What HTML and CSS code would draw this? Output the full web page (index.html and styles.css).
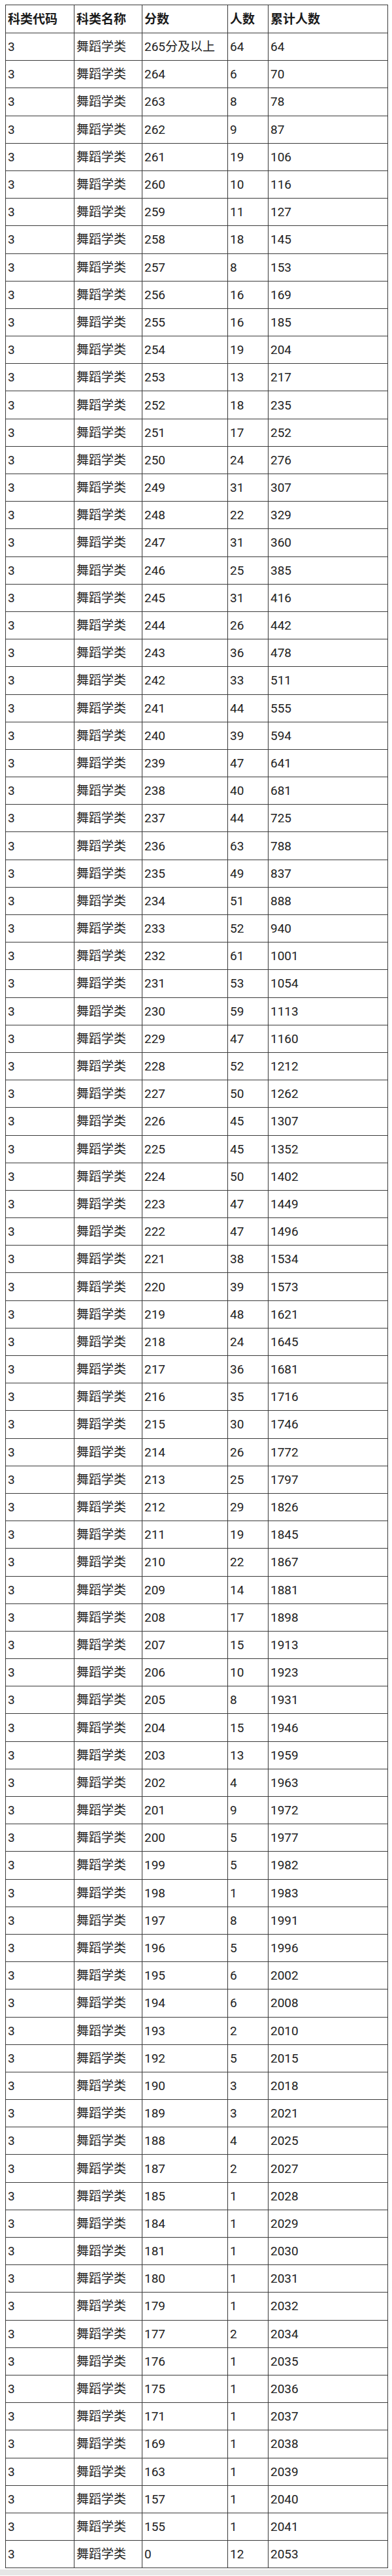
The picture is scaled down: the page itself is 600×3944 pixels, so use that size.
FILE: index.html
```html
<!DOCTYPE html>
<html lang="zh-CN">
<head>
<meta charset="utf-8">
<title>舞蹈学类 分数段统计</title>
<link rel="stylesheet" href="styles.css">
</head>
<body>
<div class="page">
<table class="score-table">
<colgroup>
<col class="c1"><col class="c2"><col class="c3"><col class="c4"><col class="c5">
</colgroup>
<thead>
<tr><th>科类代码</th><th>科类名称</th><th>分数</th><th>人数</th><th>累计人数</th></tr>
</thead>
<tbody>
<tr><td>3</td><td>舞蹈学类</td><td>265分及以上</td><td>64</td><td>64</td></tr>
<tr><td>3</td><td>舞蹈学类</td><td>264</td><td>6</td><td>70</td></tr>
<tr><td>3</td><td>舞蹈学类</td><td>263</td><td>8</td><td>78</td></tr>
<tr><td>3</td><td>舞蹈学类</td><td>262</td><td>9</td><td>87</td></tr>
<tr><td>3</td><td>舞蹈学类</td><td>261</td><td>19</td><td>106</td></tr>
<tr><td>3</td><td>舞蹈学类</td><td>260</td><td>10</td><td>116</td></tr>
<tr><td>3</td><td>舞蹈学类</td><td>259</td><td>11</td><td>127</td></tr>
<tr><td>3</td><td>舞蹈学类</td><td>258</td><td>18</td><td>145</td></tr>
<tr><td>3</td><td>舞蹈学类</td><td>257</td><td>8</td><td>153</td></tr>
<tr><td>3</td><td>舞蹈学类</td><td>256</td><td>16</td><td>169</td></tr>
<tr><td>3</td><td>舞蹈学类</td><td>255</td><td>16</td><td>185</td></tr>
<tr><td>3</td><td>舞蹈学类</td><td>254</td><td>19</td><td>204</td></tr>
<tr><td>3</td><td>舞蹈学类</td><td>253</td><td>13</td><td>217</td></tr>
<tr><td>3</td><td>舞蹈学类</td><td>252</td><td>18</td><td>235</td></tr>
<tr><td>3</td><td>舞蹈学类</td><td>251</td><td>17</td><td>252</td></tr>
<tr><td>3</td><td>舞蹈学类</td><td>250</td><td>24</td><td>276</td></tr>
<tr><td>3</td><td>舞蹈学类</td><td>249</td><td>31</td><td>307</td></tr>
<tr><td>3</td><td>舞蹈学类</td><td>248</td><td>22</td><td>329</td></tr>
<tr><td>3</td><td>舞蹈学类</td><td>247</td><td>31</td><td>360</td></tr>
<tr><td>3</td><td>舞蹈学类</td><td>246</td><td>25</td><td>385</td></tr>
<tr><td>3</td><td>舞蹈学类</td><td>245</td><td>31</td><td>416</td></tr>
<tr><td>3</td><td>舞蹈学类</td><td>244</td><td>26</td><td>442</td></tr>
<tr><td>3</td><td>舞蹈学类</td><td>243</td><td>36</td><td>478</td></tr>
<tr><td>3</td><td>舞蹈学类</td><td>242</td><td>33</td><td>511</td></tr>
<tr><td>3</td><td>舞蹈学类</td><td>241</td><td>44</td><td>555</td></tr>
<tr><td>3</td><td>舞蹈学类</td><td>240</td><td>39</td><td>594</td></tr>
<tr><td>3</td><td>舞蹈学类</td><td>239</td><td>47</td><td>641</td></tr>
<tr><td>3</td><td>舞蹈学类</td><td>238</td><td>40</td><td>681</td></tr>
<tr><td>3</td><td>舞蹈学类</td><td>237</td><td>44</td><td>725</td></tr>
<tr><td>3</td><td>舞蹈学类</td><td>236</td><td>63</td><td>788</td></tr>
<tr><td>3</td><td>舞蹈学类</td><td>235</td><td>49</td><td>837</td></tr>
<tr><td>3</td><td>舞蹈学类</td><td>234</td><td>51</td><td>888</td></tr>
<tr><td>3</td><td>舞蹈学类</td><td>233</td><td>52</td><td>940</td></tr>
<tr><td>3</td><td>舞蹈学类</td><td>232</td><td>61</td><td>1001</td></tr>
<tr><td>3</td><td>舞蹈学类</td><td>231</td><td>53</td><td>1054</td></tr>
<tr><td>3</td><td>舞蹈学类</td><td>230</td><td>59</td><td>1113</td></tr>
<tr><td>3</td><td>舞蹈学类</td><td>229</td><td>47</td><td>1160</td></tr>
<tr><td>3</td><td>舞蹈学类</td><td>228</td><td>52</td><td>1212</td></tr>
<tr><td>3</td><td>舞蹈学类</td><td>227</td><td>50</td><td>1262</td></tr>
<tr><td>3</td><td>舞蹈学类</td><td>226</td><td>45</td><td>1307</td></tr>
<tr><td>3</td><td>舞蹈学类</td><td>225</td><td>45</td><td>1352</td></tr>
<tr><td>3</td><td>舞蹈学类</td><td>224</td><td>50</td><td>1402</td></tr>
<tr><td>3</td><td>舞蹈学类</td><td>223</td><td>47</td><td>1449</td></tr>
<tr><td>3</td><td>舞蹈学类</td><td>222</td><td>47</td><td>1496</td></tr>
<tr><td>3</td><td>舞蹈学类</td><td>221</td><td>38</td><td>1534</td></tr>
<tr><td>3</td><td>舞蹈学类</td><td>220</td><td>39</td><td>1573</td></tr>
<tr><td>3</td><td>舞蹈学类</td><td>219</td><td>48</td><td>1621</td></tr>
<tr><td>3</td><td>舞蹈学类</td><td>218</td><td>24</td><td>1645</td></tr>
<tr><td>3</td><td>舞蹈学类</td><td>217</td><td>36</td><td>1681</td></tr>
<tr><td>3</td><td>舞蹈学类</td><td>216</td><td>35</td><td>1716</td></tr>
<tr><td>3</td><td>舞蹈学类</td><td>215</td><td>30</td><td>1746</td></tr>
<tr><td>3</td><td>舞蹈学类</td><td>214</td><td>26</td><td>1772</td></tr>
<tr><td>3</td><td>舞蹈学类</td><td>213</td><td>25</td><td>1797</td></tr>
<tr><td>3</td><td>舞蹈学类</td><td>212</td><td>29</td><td>1826</td></tr>
<tr><td>3</td><td>舞蹈学类</td><td>211</td><td>19</td><td>1845</td></tr>
<tr><td>3</td><td>舞蹈学类</td><td>210</td><td>22</td><td>1867</td></tr>
<tr><td>3</td><td>舞蹈学类</td><td>209</td><td>14</td><td>1881</td></tr>
<tr><td>3</td><td>舞蹈学类</td><td>208</td><td>17</td><td>1898</td></tr>
<tr><td>3</td><td>舞蹈学类</td><td>207</td><td>15</td><td>1913</td></tr>
<tr><td>3</td><td>舞蹈学类</td><td>206</td><td>10</td><td>1923</td></tr>
<tr><td>3</td><td>舞蹈学类</td><td>205</td><td>8</td><td>1931</td></tr>
<tr><td>3</td><td>舞蹈学类</td><td>204</td><td>15</td><td>1946</td></tr>
<tr><td>3</td><td>舞蹈学类</td><td>203</td><td>13</td><td>1959</td></tr>
<tr><td>3</td><td>舞蹈学类</td><td>202</td><td>4</td><td>1963</td></tr>
<tr><td>3</td><td>舞蹈学类</td><td>201</td><td>9</td><td>1972</td></tr>
<tr><td>3</td><td>舞蹈学类</td><td>200</td><td>5</td><td>1977</td></tr>
<tr><td>3</td><td>舞蹈学类</td><td>199</td><td>5</td><td>1982</td></tr>
<tr><td>3</td><td>舞蹈学类</td><td>198</td><td>1</td><td>1983</td></tr>
<tr><td>3</td><td>舞蹈学类</td><td>197</td><td>8</td><td>1991</td></tr>
<tr><td>3</td><td>舞蹈学类</td><td>196</td><td>5</td><td>1996</td></tr>
<tr><td>3</td><td>舞蹈学类</td><td>195</td><td>6</td><td>2002</td></tr>
<tr><td>3</td><td>舞蹈学类</td><td>194</td><td>6</td><td>2008</td></tr>
<tr><td>3</td><td>舞蹈学类</td><td>193</td><td>2</td><td>2010</td></tr>
<tr><td>3</td><td>舞蹈学类</td><td>192</td><td>5</td><td>2015</td></tr>
<tr><td>3</td><td>舞蹈学类</td><td>190</td><td>3</td><td>2018</td></tr>
<tr><td>3</td><td>舞蹈学类</td><td>189</td><td>3</td><td>2021</td></tr>
<tr><td>3</td><td>舞蹈学类</td><td>188</td><td>4</td><td>2025</td></tr>
<tr><td>3</td><td>舞蹈学类</td><td>187</td><td>2</td><td>2027</td></tr>
<tr><td>3</td><td>舞蹈学类</td><td>185</td><td>1</td><td>2028</td></tr>
<tr><td>3</td><td>舞蹈学类</td><td>184</td><td>1</td><td>2029</td></tr>
<tr><td>3</td><td>舞蹈学类</td><td>181</td><td>1</td><td>2030</td></tr>
<tr><td>3</td><td>舞蹈学类</td><td>180</td><td>1</td><td>2031</td></tr>
<tr><td>3</td><td>舞蹈学类</td><td>179</td><td>1</td><td>2032</td></tr>
<tr><td>3</td><td>舞蹈学类</td><td>177</td><td>2</td><td>2034</td></tr>
<tr><td>3</td><td>舞蹈学类</td><td>176</td><td>1</td><td>2035</td></tr>
<tr><td>3</td><td>舞蹈学类</td><td>175</td><td>1</td><td>2036</td></tr>
<tr><td>3</td><td>舞蹈学类</td><td>171</td><td>1</td><td>2037</td></tr>
<tr><td>3</td><td>舞蹈学类</td><td>169</td><td>1</td><td>2038</td></tr>
<tr><td>3</td><td>舞蹈学类</td><td>163</td><td>1</td><td>2039</td></tr>
<tr><td>3</td><td>舞蹈学类</td><td>157</td><td>1</td><td>2040</td></tr>
<tr><td>3</td><td>舞蹈学类</td><td>155</td><td>1</td><td>2041</td></tr>
<tr><td>3</td><td>舞蹈学类</td><td>0</td><td>12</td><td>2053</td></tr>
</tbody>
</table>
</div>
<div class="footer-band"></div>
</body>
</html>
```

FILE: styles.css
```css
html, body {
  margin: 0;
  padding: 0;
  background: #ffffff;
}

.page {
  padding: 7px 7px 0 8px;
}

.score-table {
  width: 585px;
  border-collapse: collapse;
  table-layout: fixed;
  font-family: Roboto, "Noto Sans CJK SC", sans-serif;
  font-size: 19px;
  color: #222222;
}

.c1 { width: 105px; }
.c2 { width: 104px; }
.c3 { width: 131px; }
.c4 { width: 62px; }
.c5 { width: 183px; }

.score-table th,
.score-table td {
  border: 1px solid #3a3a3a;
  padding: 0 3px;
  text-align: left;
  vertical-align: middle;
  white-space: nowrap;
  line-height: 1;
}

.score-table th {
  height: 42px;
  font-weight: 700;
  color: #1a1a1a;
}

.score-table td {
  height: 41.2px;
}

.footer-band {
  height: 9px;
  margin-top: 2px;
  background: #e6e6e6;
}
```
